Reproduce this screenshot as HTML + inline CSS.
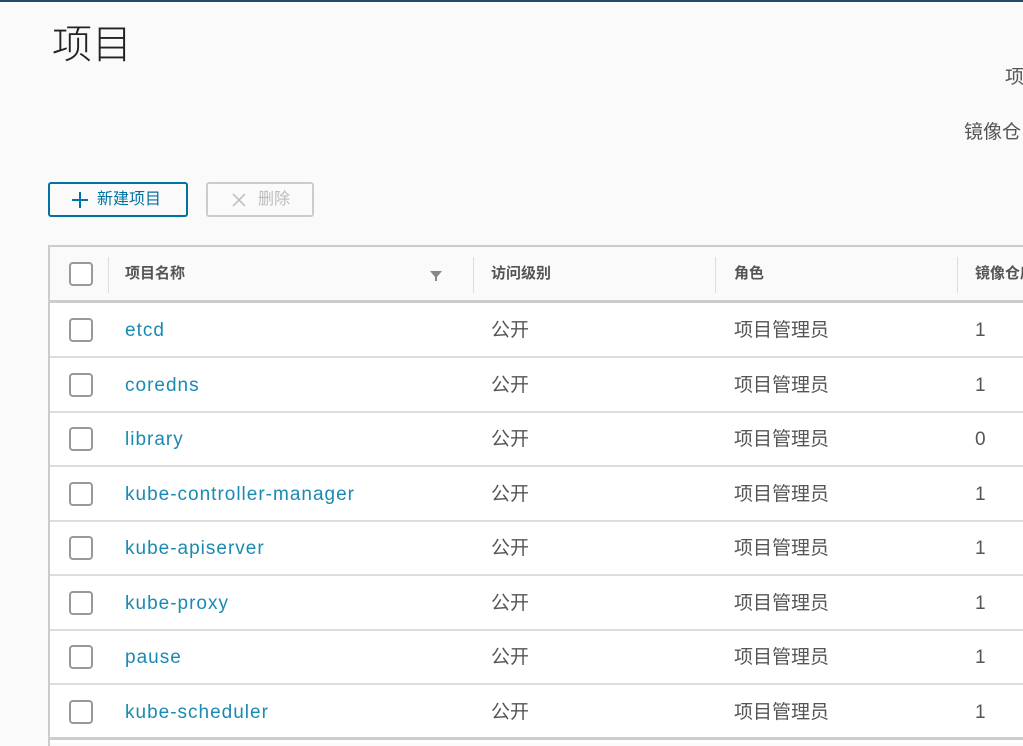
<!DOCTYPE html>
<html><head><meta charset="utf-8"><style>
*{margin:0;padding:0;box-sizing:border-box}
html,body{width:1023px;height:746px;overflow:hidden}
body{background:#fafafa;font-family:"Liberation Sans","Noto Sans CJK SC",sans-serif;position:relative;color:#333}
.top{position:absolute;left:0;top:0;width:1023px;height:2px;background:#1e4d6b}
.title{position:absolute;left:52px;top:19px;font-size:40px;font-weight:300;color:#222;line-height:52px}
.r1{position:absolute;left:1005px;top:62px;font-size:19px;color:#555}
.r2{position:absolute;left:964px;top:117px;font-size:19px;color:#555;white-space:nowrap}
.btn{position:absolute;top:182px;height:35px;border-radius:3px;font-size:16px;line-height:31px;white-space:nowrap}
.b1{left:48px;width:140px;border:2px solid #0072a3;color:#0072a3;padding-left:22px}
.b2{left:206px;width:108px;border:2px solid #ccc;color:#bbb;padding-left:24px}
.tbl{position:absolute;left:48px;top:245px;width:990px;height:510px;border:2px solid #ccc;border-right:none;background:#fff}
.hd{position:absolute;left:0;top:0;width:100%;height:56px;background:#fafafa;border-bottom:3px solid #ccc}
.hd span{position:absolute;top:15px;font-size:15px;font-weight:bold;color:#555}
.dv{position:absolute;top:10px;width:1px;height:36px;background:#ddd}
.cb{position:absolute;left:19px;width:24px;height:24px;border:2px solid #999;border-radius:4px;background:#fff}
.row{position:absolute;left:0;width:100%;height:55px;border-bottom:2px solid #ddd}
.row span{position:absolute;top:0;line-height:56px;font-size:19px;color:#555}
.row .n{left:75px;color:#1a8ab2;letter-spacing:1px}
</style></head><body>
<div class="top"></div>
<div class="title">项目</div>
<div class="r1">项</div>
<div class="r2">镜像仓</div>
<div class="btn b1"><svg style="position:absolute;left:22px;top:8px" width="16" height="16"><path d="M8 0V16M0 8H16" stroke="#0072a3" stroke-width="2"/></svg><span style="margin-left:25px">新建项目</span></div>
<div class="btn b2"><svg style="position:absolute;left:24px;top:9px" width="14" height="14"><path d="M1 1L13 13M13 1L1 13" stroke="#bbb" stroke-width="1.5"/></svg><span style="margin-left:26px">删除</span></div>
<div class="tbl">
<div class="hd">
<div class="cb" style="top:15px"></div>
<div class="dv" style="left:58px"></div>
<span style="left:75px">项目名称</span>
<svg style="position:absolute;left:380px;top:24px" width="12" height="10"><path d="M0 0H12L7 6V10H5V6Z" fill="#888"/></svg>
<div class="dv" style="left:423px"></div>
<span style="left:441px">访问级别</span>
<div class="dv" style="left:665px"></div>
<span style="left:684px">角色</span>
<div class="dv" style="left:907px"></div>
<span style="left:925px">镜像仓库</span>
</div>
<div class="row" style="top:56px"><div class="cb" style="top:15px"></div><span class="n">etcd</span><span style="left:441px">公开</span><span style="left:684px">项目管理员</span><span style="left:925px">1</span></div>
<div class="row" style="top:111px"><div class="cb" style="top:15px"></div><span class="n">coredns</span><span style="left:441px">公开</span><span style="left:684px">项目管理员</span><span style="left:925px">1</span></div>
<div class="row" style="top:165px"><div class="cb" style="top:15px"></div><span class="n">library</span><span style="left:441px">公开</span><span style="left:684px">项目管理员</span><span style="left:925px">0</span></div>
<div class="row" style="top:220px"><div class="cb" style="top:15px"></div><span class="n">kube-controller-manager</span><span style="left:441px">公开</span><span style="left:684px">项目管理员</span><span style="left:925px">1</span></div>
<div class="row" style="top:274px"><div class="cb" style="top:15px"></div><span class="n">kube-apiserver</span><span style="left:441px">公开</span><span style="left:684px">项目管理员</span><span style="left:925px">1</span></div>
<div class="row" style="top:329px"><div class="cb" style="top:15px"></div><span class="n">kube-proxy</span><span style="left:441px">公开</span><span style="left:684px">项目管理员</span><span style="left:925px">1</span></div>
<div class="row" style="top:383px"><div class="cb" style="top:15px"></div><span class="n">pause</span><span style="left:441px">公开</span><span style="left:684px">项目管理员</span><span style="left:925px">1</span></div>
<div class="row" style="top:438px;border-bottom:3px solid #ccc"><div class="cb" style="top:15px"></div><span class="n">kube-scheduler</span><span style="left:441px">公开</span><span style="left:684px">项目管理员</span><span style="left:925px">1</span></div>
<div style="position:absolute;left:0;top:496px;width:100%;height:20px;background:#fafafa"></div>
</div>
</body></html>
